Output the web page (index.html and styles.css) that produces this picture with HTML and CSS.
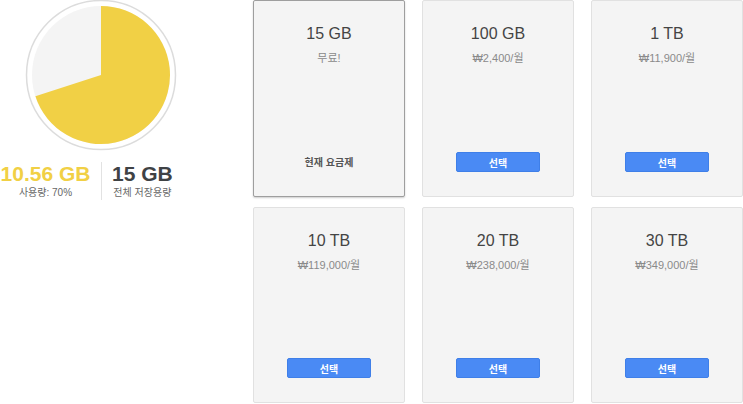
FILE: index.html
```html
<!DOCTYPE html>
<html>
  <head>
    <meta charset="utf-8">
    <link rel="stylesheet" href="styles.css">
  </head>
  <body>
    <div class="page">

      <div class="usage">
        <svg class="pie" width="152" height="151" viewBox="0 0 152 151">
          <circle cx="76" cy="75" r="74.5" fill="#fff" stroke="#dcdcdc" stroke-width="1.5"/>
          <circle cx="76" cy="75" r="69" fill="#f4f4f4"/>
          <path d="M76 75 L76 6 A69 69 0 1 1 10.38 96.32 Z" fill="#f1d045"/>
        </svg>
        <div class="stats">
          <div class="stat used">
            <div class="num">10.56 GB</div>
            <div class="lbl">사용량: 70%</div>
          </div>
          <div class="stat total">
            <div class="num">15 GB</div>
            <div class="lbl">전체 저장용량</div>
          </div>
        </div>
      </div>

      <div class="plans">
        <div class="plan current">
          <div class="size">15 GB</div>
          <div class="price">무료!</div>
          <div class="now">현재 요금제</div>
        </div>
        <div class="plan">
          <div class="size">100 GB</div>
          <div class="price">₩2,400/월</div>
          <button class="pick">선택</button>
        </div>
        <div class="plan">
          <div class="size">1 TB</div>
          <div class="price">₩11,900/월</div>
          <button class="pick">선택</button>
        </div>
        <div class="plan">
          <div class="size">10 TB</div>
          <div class="price">₩119,000/월</div>
          <button class="pick">선택</button>
        </div>
        <div class="plan">
          <div class="size">20 TB</div>
          <div class="price">₩238,000/월</div>
          <button class="pick">선택</button>
        </div>
        <div class="plan">
          <div class="size">30 TB</div>
          <div class="price">₩349,000/월</div>
          <button class="pick">선택</button>
        </div>
      </div>

    </div>
  </body>
</html>
```

FILE: styles.css
```css
body {
  margin: 0;
  padding: 0;
  font-family: "Liberation Sans", Arial, "Noto Sans CJK KR", sans-serif;
  color: #444;
  background-color: white;
}
.page {
  display: flex;
  align-items: flex-start;
}
.usage {
  width: 253px;
  flex-shrink: 0;
}
.pie {
  display: block;
  margin-left: 25px;
}
.stats {
  display: flex;
  margin-top: 11px;
}
.stat {
  text-align: center;
}
.stat .num {
  font-size: 21px;
  font-weight: bold;
  line-height: 24px;
}
.stat .lbl {
  font-size: 10px;
  color: #666;
  line-height: 14px;
}
.used {
  width: 91px;
  padding-right: 10px;
  border-right: 1px solid #e2e2e2;
}
.used .num {
  color: #f1d045;
}
.total {
  padding-left: 10px;
}
.total .num {
  color: #3f4245;
}

/* 요금제 카드 */
.plans {
  display: grid;
  grid-template-columns: repeat(3, 152px);
  grid-template-rows: 197px 196px;
  column-gap: 17px;
  row-gap: 10px;
}
.plan {
  box-sizing: border-box;
  background-color: #f4f4f4;
  border: 1px solid #e1e1e1;
  border-radius: 2px;
  display: flex;
  flex-direction: column;
  align-items: center;
  padding-top: 23px;
}
.plan.current {
  border-color: #9e9e9e;
  box-shadow: 0 1px 2px rgba(0, 0, 0, 0.2);
}
.size {
  font-size: 16px;
  line-height: 20px;
}
.price {
  font-size: 11px;
  color: #8a8a8a;
  margin-top: 5px;
}
.now {
  margin-top: auto;
  margin-bottom: 27px;
  font-size: 10px;
  font-weight: bold;
  color: #555;
}
.pick {
  margin-top: auto;
  margin-bottom: 24px;
  width: 84px;
  height: 20px;
  border: 1px solid #3f7fe8;
  border-radius: 2px;
  background-color: #4a8af4;
  color: white;
  font: bold 10px "Liberation Sans", "Noto Sans CJK KR", sans-serif;
  padding: 0;
}
```
